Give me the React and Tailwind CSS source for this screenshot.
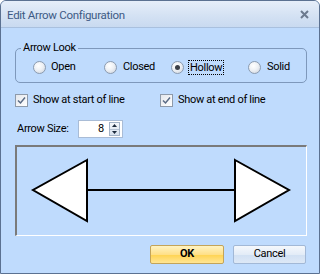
import React from "react";

function Radio({ checked }) {
  return (
    <span className="relative flex h-[13px] w-[13px] items-center justify-center rounded-full border border-[#8b9bb0] bg-[radial-gradient(circle_at_40%_35%,#ffffff_0%,#eef1f5_45%,#c9d0da_100%)]">
      {checked && <span className="h-[5px] w-[5px] rounded-full bg-[#3a3f47]" />}
    </span>
  );
}

function Check() {
  return (
    <span className="flex h-[13px] w-[13px] items-center justify-center border border-[#8e9aaa] bg-[linear-gradient(135deg,#e4e7ec,#ffffff)]">
      <svg width="9" height="9" viewBox="0 0 9 9">
        <path d="M1 4.5 L3.5 7 L8 1.5" fill="none" stroke="#5a6b86" strokeWidth="1.5" />
      </svg>
    </span>
  );
}

export default function App() {
  const font = { fontFamily: 'Roboto, "Liberation Sans", Arial, sans-serif' };
  return (
    <div
      className="flex h-[274px] w-[320px] flex-col overflow-hidden rounded-t-[6px] border border-[#5b7191] bg-[#bfdbfd] text-[11px] tracking-[-0.3px] text-black"
      style={font}
    >
      <div className="flex h-[27px] shrink-0 items-center justify-between border-b border-[#a9c0de] bg-[linear-gradient(#e6eef9,#d3e1f3_60%,#c9daf0)] pl-[6px] pr-[10px] pt-[3px]">
        <span className="text-[11.5px] text-[#3d5a84]">Edit Arrow Configuration</span>
        <svg width="9" height="9" viewBox="0 0 9 9" className="mt-[-2px]">
          <path d="M1 1 L8 8 M8 1 L1 8" stroke="#6c7a8e" strokeWidth="2" />
        </svg>
      </div>

      <div className="flex flex-1 flex-col pl-[14px]">
        <div className="relative mt-[20px] flex h-[35px] w-[292px] items-center rounded-[5px] border border-[#7e98bb] pl-[17px]">
          <span className="absolute left-[5px] top-[-8px] bg-[#bfdbfd] px-[2px] leading-[14px]">Arrow Look</span>
          <div className="flex w-[71px] items-center gap-[5px] pt-[3px]">
            <Radio />
            <span>Open</span>
          </div>
          <div className="flex w-[67px] items-center gap-[6px] pt-[3px]">
            <Radio />
            <span>Closed</span>
          </div>
          <div className="flex w-[77px] items-center gap-[4px] pt-[3px]">
            <Radio checked />
            <span className="border border-dotted border-black px-[1px] leading-[13px]">Hollow</span>
          </div>
          <div className="flex items-center gap-[6px] pt-[3px]">
            <Radio />
            <span>Solid</span>
          </div>
        </div>

        <div className="mt-[10px] flex h-[14px] items-center">
          <div className="flex w-[145px] items-center gap-[5px]">
            <Check />
            <span>Show at start of line</span>
          </div>
          <div className="flex items-center gap-[5px]">
            <Check />
            <span>Show at end of line</span>
          </div>
        </div>

        <div className="mt-[13px] flex h-[18px] items-center">
          <span className="w-[63px] pl-[2px]">Arrow Size:</span>
          <div className="flex h-[18px] w-[45px] items-center border border-[#a9bcd6] bg-white pr-[2px]">
            <span className="flex-1 pr-[5px] text-right">8</span>
            <div className="flex h-[14px] w-[11px] flex-col border border-[#a4b4c8] bg-[linear-gradient(#f4f7fb,#d8e2ee)]">
              <div className="flex flex-1 items-center justify-center border-b border-[#b6c3d4]">
                <svg width="5" height="3" viewBox="0 0 5 3"><path d="M0 3 L2.5 0 L5 3Z" fill="#1c2a3c" /></svg>
              </div>
              <div className="flex flex-1 items-center justify-center">
                <svg width="5" height="3" viewBox="0 0 5 3"><path d="M0 0 L2.5 3 L5 0Z" fill="#1c2a3c" /></svg>
              </div>
            </div>
          </div>
        </div>

        <div className="mt-[7px] h-[91px] w-[292px] border-b border-l-2 border-r border-t-2 border-b-white border-l-[#7a7a7a] border-r-white border-t-[#7a7a7a]">
          <svg width="288" height="88" viewBox="0 0 288 88" className="block">
            <g transform="translate(-17,-147)">
              <line x1="87" y1="190" x2="235" y2="190" stroke="#000" strokeWidth="2" />
              <path d="M87 160 L33 190 L87 221 Z" fill="#fff" stroke="#000" strokeWidth="2" strokeLinejoin="miter" />
              <path d="M235 160 L289 190 L235 221 Z" fill="#fff" stroke="#000" strokeWidth="2" strokeLinejoin="miter" />
            </g>
          </svg>
        </div>

        <div className="mt-[9px] flex h-[19px] items-stretch pl-[135px]">
          <button className="w-[74px] rounded-[2px] border border-[#c3a45a] bg-[linear-gradient(#fff3c2,#ffe088_50%,#ffd34f_51%,#ffe595)] text-[11px] font-bold text-black" style={font}>
            OK
          </button>
          <button className="ml-[9px] w-[73px] rounded-[2px] border border-[#a2b8d6] bg-[linear-gradient(#f5f8fc,#e3ecf7_50%,#d1e0f3_51%,#dde8f6)] text-[11px] text-black" style={font}>
            Cancel
          </button>
        </div>
      </div>
    </div>
  );
}
